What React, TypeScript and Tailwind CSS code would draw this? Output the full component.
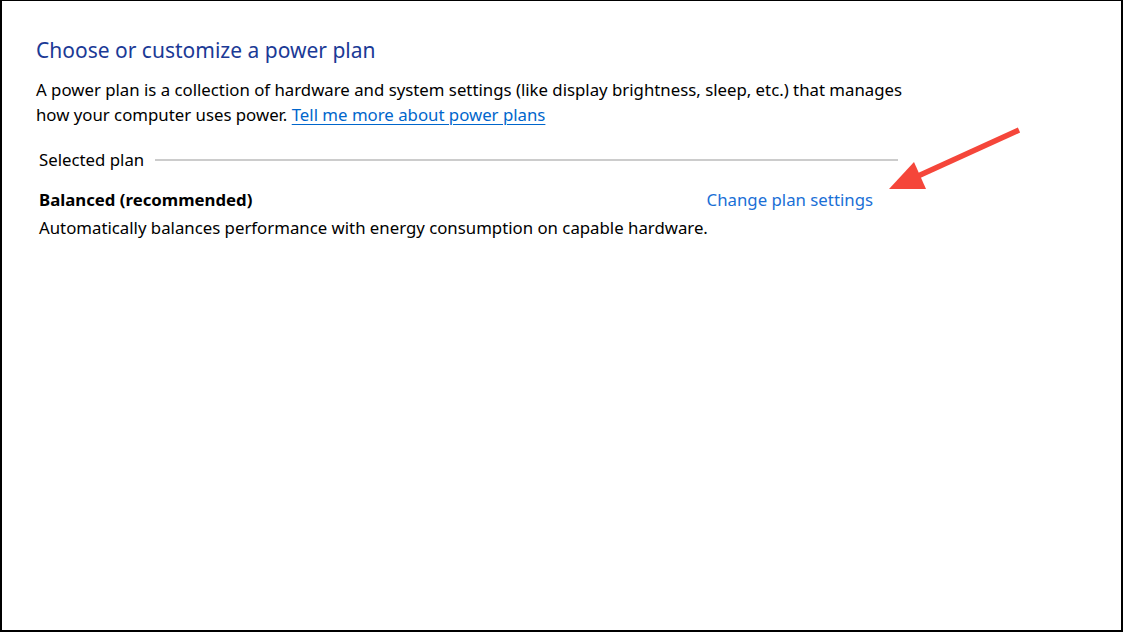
import React from 'react';

const font = { fontFamily: '"Noto Sans", "Open Sans", sans-serif' };

export default function App() {
    return (
        <div
            className="relative w-[1123px] h-[632px] bg-white border-black border-t border-l-2 border-r-2 border-b-2 overflow-hidden text-black"
            style={font}
        >
            <div className="pl-[34px] pt-[35px]">
                {/* Heading */}
                <h1 className="text-[21px] leading-[28px] text-[#1b3a96]">Choose or customize a power plan</h1>

                {/* Intro */}
                <p className="mt-[13px] text-[16.8px] leading-[25px]">
                    A power plan is a collection of hardware and system settings (like display brightness, sleep, etc.) that manages
                    <br />
                    how your computer uses power.{' '}
                    <a href="#" className="text-[#0066cc] underline underline-offset-[3px]">
                        Tell me more about power plans
                    </a>
                </p>

                {/* Selected plan group */}
                <div className="mt-[22px] ml-[3px] flex items-center w-[859px]">
                    <span className="text-[16.8px] leading-[22px]">Selected plan</span>
                    <div className="ml-[11px] flex-1 h-[2px] bg-[#cccccc]" />
                </div>

                <div className="mt-[18px] ml-[3px] w-[834px] flex items-center justify-between">
                    <span className="text-[16.8px] leading-[22px] font-bold">Balanced (recommended)</span>
                    <a href="#" className="text-[16.8px] leading-[22px] text-[#1a6fd6]">
                        Change plan settings
                    </a>
                </div>
                <p className="ml-[3px] mt-[6px] text-[16.8px] leading-[22px]">
                    Automatically balances performance with energy consumption on capable hardware.
                </p>
            </div>

            {/* Annotation arrow */}
            <svg className="absolute left-0 top-0 pointer-events-none" width="1123" height="632">
                <line x1="1017" y1="129" x2="916" y2="175" stroke="#f5463a" strokeWidth="5.5" />
                <polygon points="887,188 912,161 924,188" fill="#f5463a" />
            </svg>
        </div>
    );
}
